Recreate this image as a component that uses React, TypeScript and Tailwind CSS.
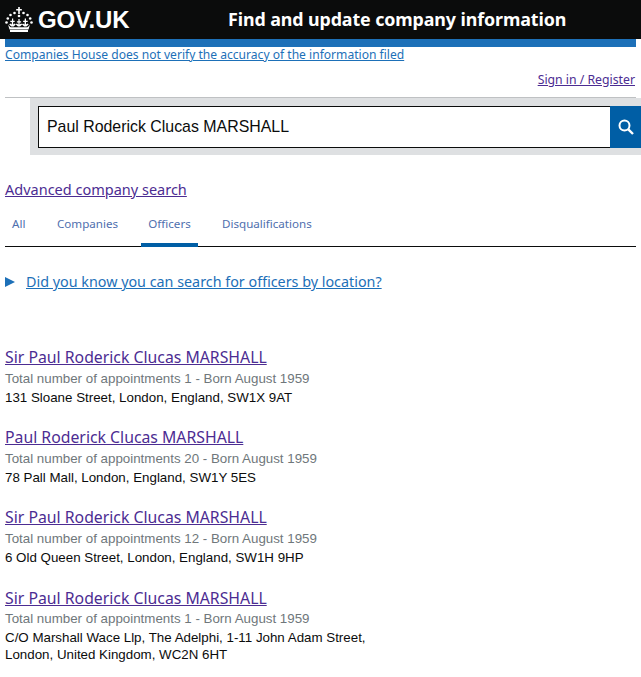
const nta = { fontFamily: '"Noto Sans", "Liberation Sans", sans-serif' };

function Crown() {
  return (
    <svg width="28" height="25" viewBox="0 0 28 25" fill="#fff" aria-hidden="true">
      <path d="M13.200 0h1.600v2h2v1.500h-2V7h-1.600V3.500h-2V2h2z" />
      <circle cx="14" cy="9" r="1.300" />
      <circle cx="9.500" cy="6" r="1.300" />
      <circle cx="18.500" cy="6" r="1.300" />
      <circle cx="5.500" cy="8" r="1.300" />
      <circle cx="22.500" cy="8" r="1.300" />
      <circle cx="2.800" cy="11.500" r="1.300" />
      <circle cx="25.200" cy="11.500" r="1.300" />
      <circle cx="1.500" cy="15.500" r="1.300" />
      <circle cx="26.500" cy="15.500" r="1.300" />
      <path d="M7 11.500h1.200v2.200h1.500v1.300H8.200v2.500L9.800 16.500l1 1-2.200 2H6.400l-2.200-2 1-1 1.600 1V15H5.300v-1.300H7z" />
      <path d="M13.400 12h1.200v2.200h1.500v1.300h-1.500v2l1.600-1 1 1-2.200 2h-2l-2.200-2 1-1 1.600 1v-2h-1.500v-1.300h1.500z" />
      <path d="M19.800 11.500H21v2.200h1.700V15H21v2.500l1.600-1 1 1-2.200 2h-2.200l-2.200-2 1-1 1.600 1V15h-1.500v-1.300h1.500z" />
      <path d="M3 17.500c1 1.500 2 2.500 3 2.800h16c1-.3 2-1.300 3-2.800l-1.500 5H4.500z" />
      <rect x="5" y="23" width="18" height="2" />
    </svg>
  );
}

function Officer({ name, meta, address, tight }: { name: string; meta: string; address: React.ReactNode; tight?: boolean }) {
  return (
    <li className="mb-[21px] [&:nth-child(3)]:mb-[22px]">
      <a href="#" className="block text-[15.8px] leading-[20px] text-[#4c2c92] underline whitespace-nowrap" style={nta}>{name}</a>
      <div className={`${tight ? "mt-[2px]" : "mt-[3px]"} text-[13.33px] leading-[18px] text-[#6f777b] font-['Liberation_Sans',sans-serif]`}>{meta}</div>
      <div className="mt-[1px] text-[13.33px] leading-[17px] text-[#0b0c0c] font-['Liberation_Sans',sans-serif]">{address}</div>
    </li>
  );
}

export default function App() {
  return (
    <div className="min-h-[677px] bg-white overflow-hidden" style={nta}>
      <header className="h-[39px] bg-[#0b0c0c] flex items-center text-white">
        <div className="ml-[5px] flex items-center gap-[5px] w-[223px]">
          <Crown />
          <span className="text-[24px] font-bold leading-none tracking-[-0.2px] font-['Liberation_Sans',sans-serif]">GOV.UK</span>
        </div>
        <span className="text-[17.85px] font-bold leading-none tracking-[-0.1px] whitespace-nowrap">Find and update company information</span>
      </header>
      <div className="mx-[5px]">
        <div className="h-[8px] bg-[#1d70b8]" />
        <a href="#" className="block text-[12.08px] leading-[16px] text-[#1d70b8] underline whitespace-nowrap">Companies House does not verify the accuracy of the information filed</a>
        <div className="mt-[9px] flex justify-end pr-[1px]">
          <a href="#" className="text-[12.25px] leading-[16px] text-[#4c2c92] underline">Sign in / Register</a>
        </div>
        <div className="mt-[9px] h-[1px] bg-[#bfc1c3]" />
      </div>
      <div className="ml-[30px] h-[57px] bg-[#dee0e2] pl-[8px] pt-[8px]">
        <div className="flex h-[42px]">
          <div className="flex-1 border-[1.5px] border-r-0 border-[#0b0c0c] bg-white flex items-center pl-[8px] text-[15.9px] text-[#0b0c0c] font-['Liberation_Sans',sans-serif]">
            Paul Roderick Clucas MARSHALL
          </div>
          <div className="w-[31px] bg-[#005ea5] flex items-center justify-center">
            <svg width="16" height="16" viewBox="0 0 16 16" fill="none" stroke="#fff" strokeWidth="2" aria-hidden="true">
              <circle cx="6.500" cy="6.500" r="5" />
              <path d="M10.300 10.300 15 15" strokeWidth="2.400" />
            </svg>
          </div>
        </div>
      </div>
      <div className="mx-[5px]">
        <a href="#" className="block mt-[24px] text-[14.5px] leading-[20px] text-[#4c2c92] underline whitespace-nowrap">Advanced company search</a>
        <nav className="mt-[12px] h-[36px] border-b border-[#0b0c0c] flex text-[11.6px] leading-[16px] text-[#4f6fae]">
          <a href="#" className="h-full pt-[5px] w-[52px] pl-[7px]">All</a>
          <a href="#" className="h-full pt-[5px] w-[84px]">Companies</a>
          <a href="#" className="h-[36px] pt-[5px] w-[57px] text-center border-b-[4px] border-[#005ea5]">Officers</a>
          <a href="#" className="h-full pt-[5px] pl-[24px]">Disqualifications</a>
        </nav>
        <div className="mt-[25px] flex items-center text-[14.33px] leading-[20px]">
          <svg width="10" height="10" viewBox="0 0 10 10" fill="#1d70b8" className="mr-[11px]" aria-hidden="true"><path d="M0 0l10 5-10 5z" /></svg>
          <a href="#" className="text-[#1d70b8] underline whitespace-nowrap">Did you know you can search for officers by location?</a>
        </div>
        <ul className="mt-[55px]">
          <Officer name="Sir Paul Roderick Clucas MARSHALL" meta="Total number of appointments 1 - Born August 1959" address="131 Sloane Street, London, England, SW1X 9AT" />
          <Officer name="Paul Roderick Clucas MARSHALL" meta="Total number of appointments 20 - Born August 1959" address="78 Pall Mall, London, England, SW1Y 5ES" />
          <Officer name="Sir Paul Roderick Clucas MARSHALL" meta="Total number of appointments 12 - Born August 1959" address="6 Old Queen Street, London, England, SW1H 9HP" />
          <Officer tight name="Sir Paul Roderick Clucas MARSHALL" meta="Total number of appointments 1 - Born August 1959" address={<>C/O Marshall Wace Llp, The Adelphi, 1-11 John Adam Street,<br />London, United Kingdom, WC2N 6HT</>} />
        </ul>
      </div>
    </div>
  );
}
